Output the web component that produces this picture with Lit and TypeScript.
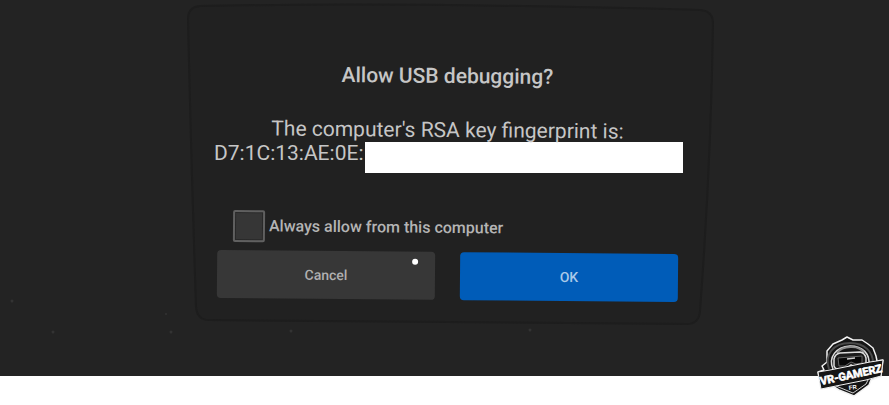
import { LitElement, html, css } from "lit";
import { customElement } from "lit/decorators.js";

@customElement("vr-logo")
class VrLogo extends LitElement {
  static styles = css`
    :host { display: block; }
    svg { display: block; width: 100%; height: auto; overflow: visible; }
    .name { font: 700 11px Roboto, "Liberation Sans", sans-serif; }
    .fr { font: 700 6px "Liberation Sans", sans-serif; }
  `;
  render() {
    return html`
      <svg viewBox="0 0 70 64" role="img" aria-label="VR-Gamerz FR">
        <path d="M26 5 L31 2 L37 5 L46 5 L52 9 L57 13 L60 21 L61 26 L67 25 L65 41 L55 45 L53 50 L38 61 L23 55 L18 52 L5 54 L2 37 L8 35 L6 31 L11 27 L11 16 L17 9 Z"
          fill="#141414" stroke="#f2f2f2" stroke-width="1.5" stroke-linejoin="round" />
        <path d="M13 34 C8 20 17 8 34 8 C49 8 57 17 57 28" fill="none" stroke="#4a4a4a" stroke-width="2" />
        <path d="M17 34 C12 22 20 12 34 11 C47 11 54 19 53 30" fill="none" stroke="#dadada" stroke-width="1.5" />
        <path d="M21 18 C26 11 43 9 48 18" fill="none" stroke="#8c8c8c" stroke-width="2" />
        <path d="M18 24 Q19 19 24 18 L44 17 Q49 18 50 23 L50 30 Q49 33 45 33 L39 32 L35 30 L31 33 L24 35 Q19 34 18 31 Z"
          fill="#1b1b1b" stroke="#dcdcdc" stroke-width="1.5" />
        <path d="M22 23 L46 21 L46 28 L40 29 L35 27 L29 31 L23 31 Z" fill="#070707" stroke="#666" />
        <path d="M31 24 L39 23" stroke="#cfcfcf" stroke-width="1.5" />
        <path d="M2 37 L14 35 L54 27 L67 25 L65 41 L50 45 L5 54 Z" fill="#151515" stroke="#f2f2f2" />
        <path d="M20 51 L37 58 L50 49 L52 45" fill="none" stroke="#cfcfcf" />
        <text class="name" x="5" y="50" fill="#fff" stroke="#fff" stroke-width=".6" transform="rotate(-12 5 50)">VR-GAMERZ</text>
        <text class="fr" x="33" y="55" fill="#fff" transform="rotate(-8 33 55)">FR</text>
      </svg>
    `;
  }
}

@customElement("app-root")
class AppRoot extends LitElement {
  static styles = css`
    :host {
      display: block;
      position: relative;
      background: #fff;
      color: #c6c6c6;
      font-family: Roboto, "Liberation Sans", sans-serif;
      padding-bottom: 29px;
    }
    * { box-sizing: border-box; }
    .scene {
      position: relative;
      background: #232323;
      padding: 5px 0 52px 6px;
    }
    .stars { position: absolute; inset: 0; width: 100%; height: 100%; }
    .dialog {
      position: relative;
      width: 100%;
      max-width: 517px;
      margin: 0 auto;
      padding: 57px 28px 24px;
    }
    .panel {
      position: absolute;
      inset: 0;
      width: 100%;
      height: 100%;
      overflow: visible;
    }
    .content { position: relative; display: flex; flex-direction: column; }
    .tilt { transform: rotate(0.5deg); }
    h1 { margin: 0; text-align: center; font-size: 21px; line-height: 28px; font-weight: 500; }
    .message { margin: 28px 0 0; text-align: center; font-size: 21px; line-height: 24px; }
    .fingerprint { display: flex; height: 32px; margin: 0 -5px 0 -3px; font-size: 21px; line-height: 22px; }
    .visible { width: 151px; white-space: nowrap; }
    .redaction { flex: 1; height: 31px; background: #fff; }
    .always {
      display: flex;
      align-items: center;
      gap: 4px;
      margin: 38px 0 0 16px;
      font-size: 16px;
      font-weight: 500;
      line-height: 32px;
      color: #b4b4b4;
    }
    .always input {
      appearance: none;
      width: 32px;
      height: 32px;
      margin: 0;
      border: 2px solid #606060;
      border-radius: 2px;
      background: #363636;
      box-shadow: inset 0 0 0 1px #292929;
    }
    .actions { display: grid; grid-template-columns: 1fr 1fr; gap: 25px; margin-top: 8px; }
    button {
      position: relative;
      height: 48px;
      border: 0;
      border-radius: 4px;
      background: #373737;
      color: #b0b0b0;
      font: 500 14px/20px Roboto, "Liberation Sans", sans-serif;
    }
    .ok { background: #005cb8; color: #a9c8e8; }
    .pointer {
      position: absolute;
      top: 7px;
      right: 17px;
      width: 6px;
      height: 6px;
      border-radius: 50%;
      background: #fff;
    }
    .logo { position: absolute; right: 3px; bottom: 6px; width: 70px; }
  `;

  render() {
    return html`
      <main class="scene">
        <svg class="stars" viewBox="0 0 889 376" preserveAspectRatio="none" aria-hidden="true">
          <g fill="#333">
            <circle cx="12" cy="301" r="1.5" /><circle cx="53" cy="332" r="1.5" />
            <circle cx="171" cy="332" r="1.5" /><circle cx="166" cy="314" r="1" />
            <circle cx="291" cy="331" r="1.5" /><circle cx="530" cy="330" r="1.5" />
          </g>
        </svg>
        <section class="dialog" aria-labelledby="title">
          <svg class="panel" viewBox="0 0 517 319" preserveAspectRatio="none" aria-hidden="true">
            <path d="M11 1 C160 -2 330 0 511 5 Q524 6 524 18 Q522 160 511 306 Q510 319 498 319 L20 315 Q8 315 7 302 Q2 150 -1 14 Q-1 2 11 1 Z"
              fill="#212121" stroke="#1d1d1d" stroke-width="2" />
          </svg>
          <div class="content">
            <h1 id="title" class="tilt">Allow USB debugging?</h1>
            <p class="message tilt">The computer's RSA key fingerprint is:</p>
            <div class="fingerprint">
              <span class="visible">D7:1C:13:AE:0E:</span>
              <span class="redaction"></span>
            </div>
            <div class="always tilt">
              <input type="checkbox" id="always" />
              <label for="always">Always allow from this computer</label>
            </div>
            <div class="actions tilt">
              <button type="button">Cancel<span class="pointer"></span></button>
              <button type="button" class="ok">OK</button>
            </div>
          </div>
        </section>
      </main>
      <vr-logo class="logo"></vr-logo>
    `;
  }
}
